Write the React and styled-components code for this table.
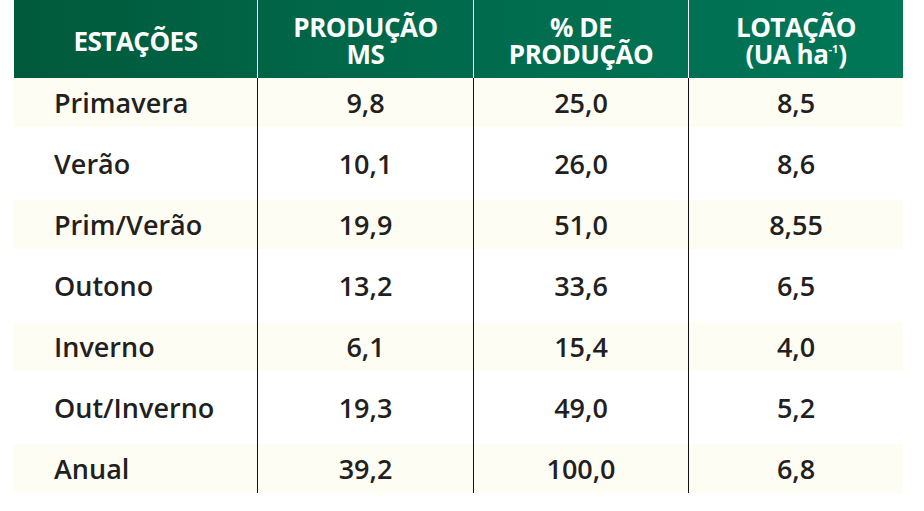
import React from "react";
import styled, { createGlobalStyle } from "styled-components";

const GlobalStyle = createGlobalStyle`
  html, body {
    margin: 0;
    padding: 0;
    background: #ffffff;
  }
  body {
    font-family: "Open Sans", "Liberation Sans", sans-serif;
  }
`;

const rows = [
  ["Primavera", "9,8", "25,0", "8,5"],
  ["Verão", "10,1", "26,0", "8,6"],
  ["Prim/Verão", "19,9", "51,0", "8,55"],
  ["Outono", "13,2", "33,6", "6,5"],
  ["Inverno", "6,1", "15,4", "4,0"],
  ["Out/Inverno", "19,3", "49,0", "5,2"],
  ["Anual", "39,2", "100,0", "6,8"],
];

const COLS = "243px 216px 215px 215px";

const Table = styled.div`
  width: 889px;
  margin-left: 14px;
`;

const HeadRow = styled.div`
  display: grid;
  grid-template-columns: ${COLS};
  height: 78px;
  background: linear-gradient(to right, #005a3b 0%, #006a4b 45%, #007758 100%);
  box-shadow: 1px 0 0 #ffffff;
`;

const HeadCell = styled.div`
  display: flex;
  align-items: center;
  justify-content: center;
  padding-top: 4px;
  color: #ffffff;
  border-left: ${(p) => (p.$first ? "none" : "1px solid #ffffff")};
`;

const HeadLabel = styled.span`
  display: block;
  text-align: center;
  font-weight: 700;
  font-size: 26px;
  line-height: 27px;
  letter-spacing: -0.5px;
  white-space: nowrap;
  sup {
    font-size: 11px;
    line-height: 0;
    vertical-align: 11px;
    letter-spacing: 0;
  }
`;

const Row = styled.div`
  display: grid;
  grid-template-columns: ${COLS};
  height: ${(p) => (p.$last ? "49px" : "61px")};
  background: ${(p) =>
    p.$striped
      ? "linear-gradient(to bottom, #fdfdf3 0, #fdfdf3 49px, transparent 49px)"
      : "transparent"};
`;

const Cell = styled.div`
  display: flex;
  align-items: center;
  justify-content: ${(p) => (p.$first ? "flex-start" : "center")};
  padding-left: ${(p) => (p.$first ? "40px" : "0")};
  padding-bottom: ${(p) => (p.$last ? "0" : "12px")};
  border-left: ${(p) => (p.$first ? "none" : "1px solid #111111")};
  color: #231f20;
  font-weight: 600;
  font-size: 27px;
  letter-spacing: 0;
`;

export default function App() {
  return (
    <>
      <GlobalStyle />
      <Table>
        <HeadRow>
          <HeadCell $first>
            <HeadLabel>ESTAÇÕES</HeadLabel>
          </HeadCell>
          <HeadCell>
            <HeadLabel>
              PRODUÇÃO
              <br />
              MS
            </HeadLabel>
          </HeadCell>
          <HeadCell>
            <HeadLabel>
              % DE
              <br />
              PRODUÇÃO
            </HeadLabel>
          </HeadCell>
          <HeadCell>
            <HeadLabel>
              LOTAÇÃO
              <br />
              (UA ha<sup>-1</sup>)
            </HeadLabel>
          </HeadCell>
        </HeadRow>
        {rows.map((r, i) => {
          const last = i === rows.length - 1;
          return (
            <Row key={r[0]} $striped={i % 2 === 0} $last={last}>
              {r.map((v, j) => (
                <Cell key={j} $first={j === 0} $last={last}>
                  {v}
                </Cell>
              ))}
            </Row>
          );
        })}
      </Table>
    </>
  );
}
